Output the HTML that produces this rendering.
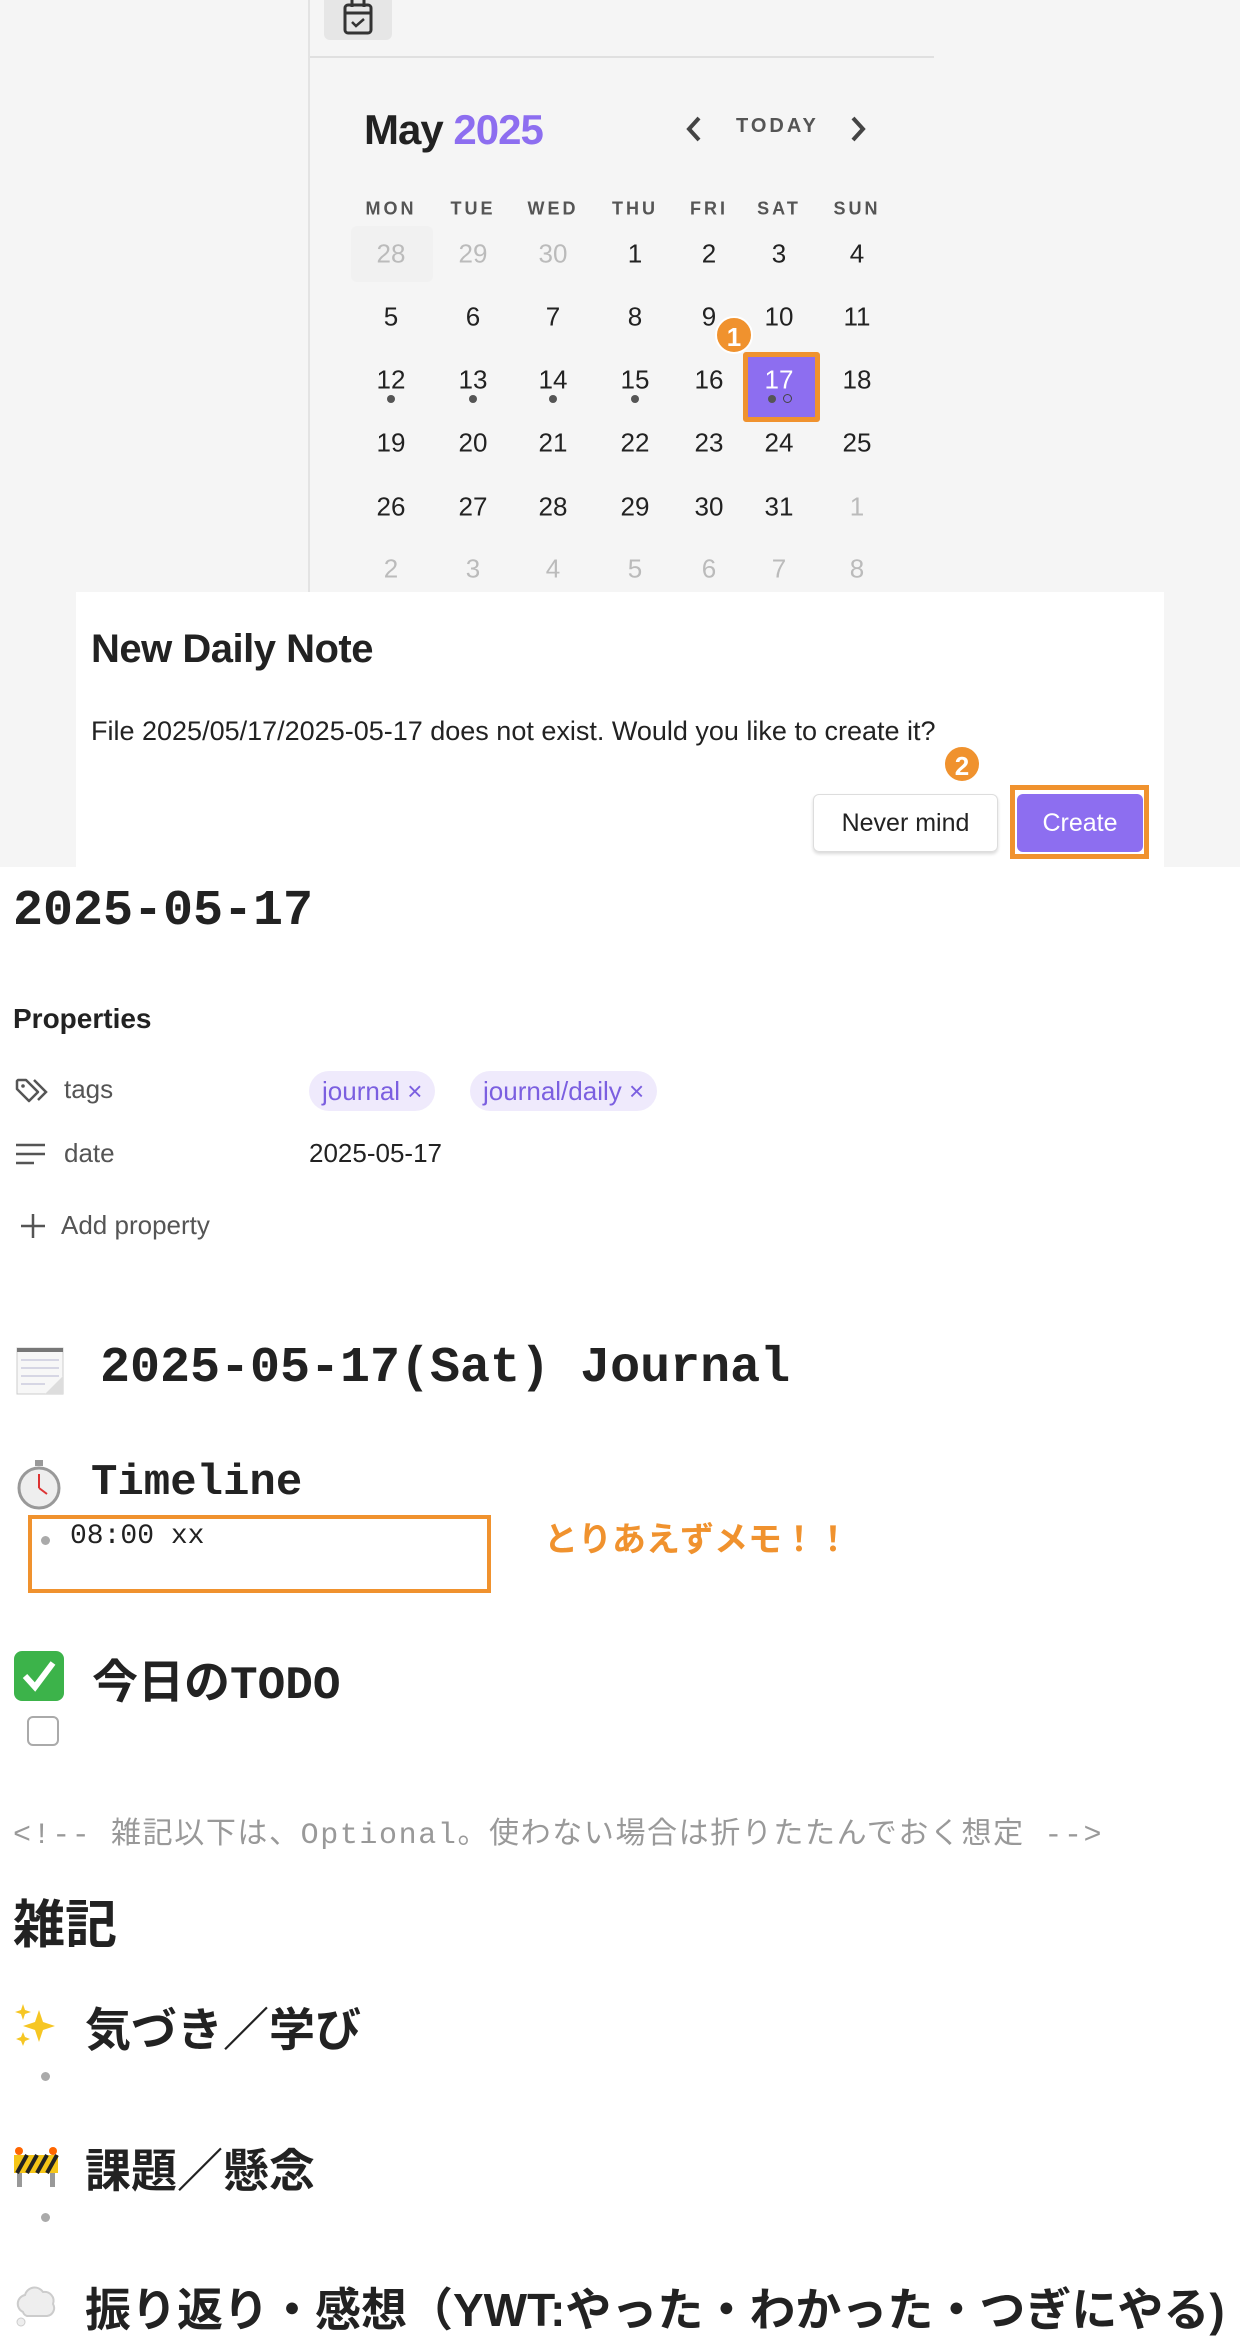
<!DOCTYPE html>
<html><head><meta charset="utf-8"><style>
*{margin:0;padding:0;box-sizing:border-box}
body{width:1240px;height:2332px;background:#fff;position:relative;overflow:hidden;font-family:"Liberation Sans","Noto Sans CJK JP",sans-serif;color:#222}
.a{position:absolute;white-space:nowrap}
.top{position:absolute;left:0;top:0;width:1240px;height:867px;background:#f5f5f5}
.cal{font-size:26px;color:#222;transform:translate(-50%,-50%);text-align:center}
.dim{color:#bbb}
.wd{font-size:18px;font-weight:bold;letter-spacing:3px;color:#555;transform:translate(-50%,-50%)}
.dot{position:absolute;width:8px;height:8px;border-radius:50%;background:#555}
.badge{position:absolute;width:38px;height:38px;border-radius:50%;background:#f0922e;color:#fff;font-weight:bold;font-size:26px;text-align:center;line-height:38px;border:2px solid #fff}
.mono{font-family:"Liberation Mono","Noto Sans CJK JP",monospace}
.h{font-family:"Liberation Mono","Noto Sans CJK JP",monospace;font-weight:bold;color:#222}
.cjk{font-family:"Liberation Sans","Noto Sans CJK JP",sans-serif;font-weight:bold;color:#222}
.bul{position:absolute;width:9px;height:9px;border-radius:50%;background:#aaa}
.chip{position:absolute;height:40px;border-radius:20px;background:#efeafc;color:#7b5fe0;font-size:26px;line-height:40px;padding:0 13px}
</style></head><body>
<div class="top"></div>
<div class="a" style="left:308px;top:0;width:2px;height:867px;background:#e3e3e3"></div>
<div class="a" style="left:310px;top:56px;width:624px;height:2px;background:#e0e0e0"></div>
<div class="a" style="left:324px;top:0;width:68px;height:40px;background:#e6e6e6;border-radius:0 0 6px 6px"></div>
<svg class="a" style="left:342px;top:0" width="32" height="36" viewBox="0 0 32 36"><rect x="3" y="5" width="26" height="28" rx="3" fill="none" stroke="#333" stroke-width="3"/><line x1="3" y1="13" x2="29" y2="13" stroke="#333" stroke-width="3"/><line x1="10" y1="0" x2="10" y2="7" stroke="#333" stroke-width="3"/><line x1="22" y1="0" x2="22" y2="7" stroke="#333" stroke-width="3"/><path d="M10 22l4 4 8-7" fill="none" stroke="#333" stroke-width="2.5"/></svg>

<div class="a" style="left:364px;top:106px;font-size:42px;font-weight:bold;letter-spacing:-1px">May <span style="color:#8d6ef0">2025</span></div>
<svg class="a" style="left:684px;top:115px" width="20" height="28" viewBox="0 0 20 28"><path d="M15 3L5 14l10 11" fill="none" stroke="#444" stroke-width="4"/></svg>
<div class="a" style="left:736px;top:115px;font-size:20px;font-weight:bold;letter-spacing:3px;color:#555">TODAY</div>
<svg class="a" style="left:848px;top:115px" width="20" height="28" viewBox="0 0 20 28"><path d="M5 3l10 11L5 25" fill="none" stroke="#444" stroke-width="4"/></svg>

<div class="a wd" style="left:391px;top:209px">MON</div>
<div class="a wd" style="left:473px;top:209px">TUE</div>
<div class="a wd" style="left:553px;top:209px">WED</div>
<div class="a wd" style="left:635px;top:209px">THU</div>
<div class="a wd" style="left:709px;top:209px">FRI</div>
<div class="a wd" style="left:779px;top:209px">SAT</div>
<div class="a wd" style="left:857px;top:209px">SUN</div>

<div class="a" style="left:351px;top:226px;width:82px;height:56px;background:#f1f1f1;border-radius:6px"></div>
<div class="a cal dim" style="left:391px;top:254px">28</div>
<div class="a cal dim" style="left:473px;top:254px">29</div>
<div class="a cal dim" style="left:553px;top:254px">30</div>
<div class="a cal" style="left:635px;top:254px">1</div>
<div class="a cal" style="left:709px;top:254px">2</div>
<div class="a cal" style="left:779px;top:254px">3</div>
<div class="a cal" style="left:857px;top:254px">4</div>

<div class="a cal" style="left:391px;top:317px">5</div>
<div class="a cal" style="left:473px;top:317px">6</div>
<div class="a cal" style="left:553px;top:317px">7</div>
<div class="a cal" style="left:635px;top:317px">8</div>
<div class="a cal" style="left:709px;top:317px">9</div>
<div class="a cal" style="left:779px;top:317px">10</div>
<div class="a cal" style="left:857px;top:317px">11</div>

<div class="a" style="left:743px;top:352px;width:77px;height:70px;border:5px solid #f0922e;background:#8d6ef0;border-radius:3px"></div>
<div class="a cal" style="left:391px;top:380px">12</div>
<div class="a cal" style="left:473px;top:380px">13</div>
<div class="a cal" style="left:553px;top:380px">14</div>
<div class="a cal" style="left:635px;top:380px">15</div>
<div class="a cal" style="left:709px;top:380px">16</div>
<div class="a cal" style="left:779px;top:380px;color:#fff">17</div>
<div class="a cal" style="left:857px;top:380px">18</div>
<div class="dot" style="left:387px;top:395px"></div>
<div class="dot" style="left:469px;top:395px"></div>
<div class="dot" style="left:549px;top:395px"></div>
<div class="dot" style="left:631px;top:395px"></div>
<div class="dot" style="left:768px;top:395px"></div>
<div class="a" style="left:783px;top:394px;width:9px;height:9px;border-radius:50%;border:1.5px solid #444"></div>
<div class="badge" style="left:715px;top:316px">1</div>

<div class="a cal" style="left:391px;top:443px">19</div>
<div class="a cal" style="left:473px;top:443px">20</div>
<div class="a cal" style="left:553px;top:443px">21</div>
<div class="a cal" style="left:635px;top:443px">22</div>
<div class="a cal" style="left:709px;top:443px">23</div>
<div class="a cal" style="left:779px;top:443px">24</div>
<div class="a cal" style="left:857px;top:443px">25</div>

<div class="a cal" style="left:391px;top:507px">26</div>
<div class="a cal" style="left:473px;top:507px">27</div>
<div class="a cal" style="left:553px;top:507px">28</div>
<div class="a cal" style="left:635px;top:507px">29</div>
<div class="a cal" style="left:709px;top:507px">30</div>
<div class="a cal" style="left:779px;top:507px">31</div>
<div class="a cal dim" style="left:857px;top:507px">1</div>

<div class="a cal dim" style="left:391px;top:569px">2</div>
<div class="a cal dim" style="left:473px;top:569px">3</div>
<div class="a cal dim" style="left:553px;top:569px">4</div>
<div class="a cal dim" style="left:635px;top:569px">5</div>
<div class="a cal dim" style="left:709px;top:569px">6</div>
<div class="a cal dim" style="left:779px;top:569px">7</div>
<div class="a cal dim" style="left:857px;top:569px">8</div>

<!-- dialog -->
<div class="a" style="left:76px;top:592px;width:1088px;height:275px;background:#fff"></div>
<div class="a" style="left:91px;top:627px;font-size:40px;font-weight:bold;letter-spacing:-0.5px">New Daily Note</div>
<div class="a" style="left:91px;top:716px;font-size:27px">File 2025/05/17/2025-05-17 does not exist. Would you like to create it?</div>
<div class="badge" style="left:943px;top:745px">2</div>
<div class="a" style="left:813px;top:794px;width:185px;height:58px;border:1px solid #ddd;border-radius:6px;box-shadow:0 2px 3px rgba(0,0,0,.15);font-size:25px;text-align:center;line-height:56px">Never mind</div>
<div class="a" style="left:1010px;top:785px;width:139px;height:74px;border:5px solid #f0922e"></div>
<div class="a" style="left:1017px;top:794px;width:126px;height:58px;background:#8d6ef0;border-radius:6px;color:#fff;font-size:25px;text-align:center;line-height:58px">Create</div>

<!-- note -->
<div class="a h" style="left:13px;top:883px;font-size:50px">2025-05-17</div>
<div class="a" style="left:13px;top:1003px;font-size:28px;font-weight:600">Properties</div>
<svg class="a" style="left:14px;top:1077px" width="36" height="28" viewBox="0 0 36 28"><path d="M3 4v8l12 12 9-9L12 3H4z" fill="none" stroke="#555" stroke-width="2.5" stroke-linejoin="round"/><circle cx="9" cy="9" r="1.8" fill="#555"/><path d="M20 3l12 12-8 8" fill="none" stroke="#555" stroke-width="2.5"/></svg>
<div class="a" style="left:64px;top:1074px;font-size:26px;color:#555">tags</div>
<div class="chip" style="left:309px;top:1071px">journal ×</div>
<div class="chip" style="left:470px;top:1071px">journal/daily ×</div>
<svg class="a" style="left:15px;top:1142px" width="32" height="26" viewBox="0 0 32 26"><path d="M1 3h29M1 12h29M1 21h18" stroke="#555" stroke-width="2.5"/></svg>
<div class="a" style="left:64px;top:1138px;font-size:26px;color:#555">date</div>
<div class="a" style="left:309px;top:1138px;font-size:26px">2025-05-17</div>
<svg class="a" style="left:20px;top:1213px" width="26" height="26" viewBox="0 0 26 26"><path d="M13 1v24M1 13h24" stroke="#555" stroke-width="2.5"/></svg>
<div class="a" style="left:61px;top:1210px;font-size:26px;color:#555">Add property</div>

<!-- H1 -->
<svg class="a" style="left:15px;top:1344px" width="52" height="52" viewBox="0 0 52 52"><rect x="2" y="4" width="46" height="46" fill="#f7f7f7" stroke="#ccc"/><path d="M2 4h46v4H2z" fill="#777"/><path d="M6 16h38M6 24h38M6 32h38M6 40h24" stroke="#ccd" stroke-width="1.5"/><path d="M30 50l18-18v18z" fill="#ddd"/></svg>
<div class="a h" style="left:100px;top:1340px;font-size:50px">2025-05-17(Sat) Journal</div>

<svg class="a" style="left:14px;top:1458px" width="50" height="52" viewBox="0 0 50 52"><rect x="21" y="2" width="8" height="6" fill="#999"/><circle cx="25" cy="30" r="20" fill="#eee" stroke="#999" stroke-width="3"/><path d="M25 30V16M25 30l8 6" stroke="#d33" stroke-width="2"/></svg>
<div class="a h" style="left:91px;top:1458px;font-size:44px">Timeline</div>
<div class="a" style="left:28px;top:1515px;width:463px;height:78px;border:4px solid #f0922e"></div>
<div class="bul" style="left:41px;top:1536px"></div>
<div class="a mono" style="left:70px;top:1521px;font-size:28px">08:00 xx</div>
<div class="a" style="left:544px;top:1512px;font-size:34px;font-weight:bold;color:#f0922e">とりあえずメモ！！</div>

<svg class="a" style="left:13px;top:1650px" width="52" height="52" viewBox="0 0 52 52"><rect x="1" y="1" width="50" height="50" rx="8" fill="#3cb34a"/><path d="M12 26l10 11 18-24" fill="none" stroke="#fff" stroke-width="6"/></svg>
<div class="a cjk" style="left:92px;top:1646px;font-size:46px">今日の<span class="h">TODO</span></div>
<div class="a" style="left:27px;top:1716px;width:32px;height:30px;border:2px solid #aaa;border-radius:6px"></div>

<div class="a mono" style="left:13px;top:1808px;font-size:30px;color:#999;letter-spacing:1.6px">&lt;!-- 雑記以下は、Optional。使わない場合は折りたたんでおく想定 --&gt;</div>

<div class="a cjk" style="left:13px;top:1883px;font-size:52px">雑記</div>

<svg class="a" style="left:13px;top:2002px" width="46" height="46" viewBox="0 0 46 46"><path d="M26 8l4 12 12 4-12 4-4 12-4-12-12-4 12-4z" fill="#f6c623"/><path d="M10 2l2 6 6 2-6 2-2 6-2-6-6-2 6-2z" fill="#f6c623"/><path d="M10 30l2 5 5 2-5 2-2 5-2-5-5-2 5-2z" fill="#f6c623"/></svg>
<div class="a cjk" style="left:85px;top:1994px;font-size:46px">気づき／学び</div>
<div class="bul" style="left:41px;top:2072px"></div>

<svg class="a" style="left:13px;top:2143px" width="46" height="46" viewBox="0 0 46 46"><rect x="4" y="30" width="5" height="14" fill="#999"/><rect x="37" y="30" width="5" height="14" fill="#999"/><rect x="1" y="12" width="44" height="18" fill="#f5c518"/><path d="M4 30l10-18M14 30l10-18M24 30l10-18M34 30l10-18" stroke="#222" stroke-width="4"/><circle cx="6" cy="8" r="4" fill="#f60"/><circle cx="40" cy="8" r="4" fill="#f60"/></svg>
<div class="a cjk" style="left:85px;top:2135px;font-size:46px">課題／懸念</div>
<div class="bul" style="left:41px;top:2213px"></div>

<svg class="a" style="left:13px;top:2282px" width="46" height="46" viewBox="0 0 46 46"><path d="M10 30a9 9 0 0 1 2-17 10 10 0 0 1 18-3 9 9 0 0 1 10 12 8 8 0 0 1-6 12H14a6 6 0 0 1-4-4z" fill="#eee" stroke="#ccc" stroke-width="2"/><circle cx="8" cy="40" r="4" fill="#eee" stroke="#ccc"/></svg>
<div class="a cjk" style="left:85px;top:2274px;font-size:46px">振り返り・感想（YWT:やった・わかった・つぎにやる)</div>
</body></html>
